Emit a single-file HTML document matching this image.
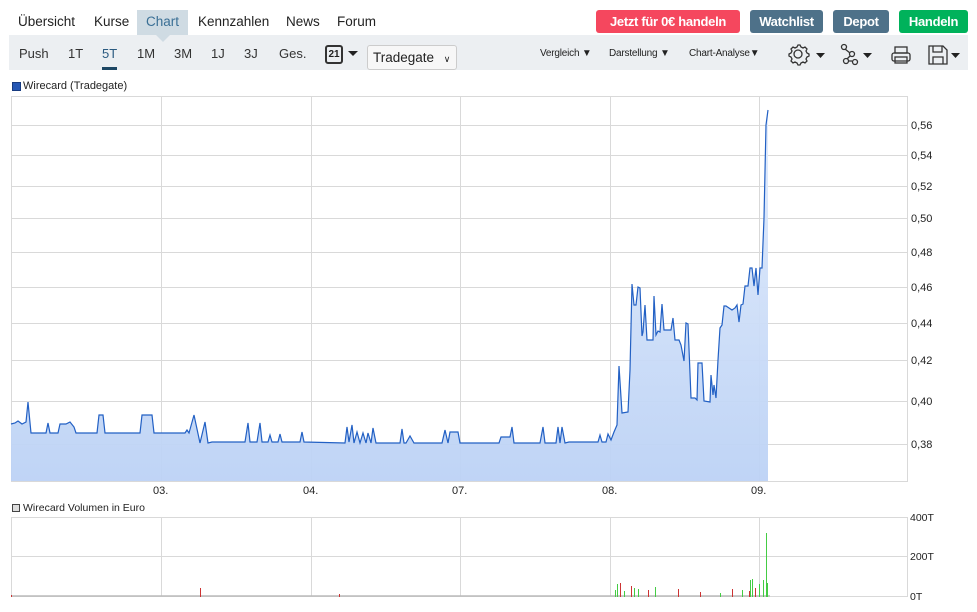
<!DOCTYPE html>
<html><head><meta charset="utf-8"><style>
body{margin:0;width:977px;height:612px;background:#fff;font-family:"Liberation Sans",sans-serif;position:relative;overflow:hidden}
.a{position:absolute}
.nav{font-size:13.5px;color:#222;top:14px}
.btn{position:absolute;top:10px;height:23px;border-radius:3px;color:#fff;font-weight:bold;font-size:13px;line-height:23px;text-align:center;letter-spacing:-0.3px}
.tb{font-size:13px;color:#333;top:46px}
.sm{font-size:10px;color:#222;top:48px;letter-spacing:-0.2px}
.lbl{font-size:11px;color:#222}
</style></head><body>
<div class="a" style="left:137px;top:10px;width:51px;height:25px;background:#cfdbe3"></div>
<div class="a nav" style="left:18px">Übersicht</div>
<div class="a nav" style="left:94px">Kurse</div>
<div class="a nav" style="left:146px;color:#3a6f95">Chart</div>
<div class="a nav" style="left:198px">Kennzahlen</div>
<div class="a nav" style="left:286px">News</div>
<div class="a nav" style="left:337px">Forum</div>
<div class="btn" style="left:596px;width:144px;background:#f5475e">Jetzt für 0€ handeln</div>
<div class="btn" style="left:750px;width:73px;background:#4e7189">Watchlist</div>
<div class="btn" style="left:833px;width:56px;background:#4e7189">Depot</div>
<div class="btn" style="left:899px;width:69px;background:#00b25b">Handeln</div>
<div class="a" style="left:9px;top:35px;width:959px;height:35px;background:#eceff2"></div>
<div class="a" style="left:156px;top:35px;width:0;height:0;border-left:7px solid transparent;border-right:7px solid transparent;border-top:7px solid #cfdbe3"></div>
<div class="a tb" style="left:19px">Push</div>
<div class="a tb" style="left:68px">1T</div>
<div class="a tb" style="left:102px;color:#2a5a80">5T</div>
<div class="a" style="left:102px;top:67px;width:15px;height:3px;background:#1d4764"></div>
<div class="a tb" style="left:137px">1M</div>
<div class="a tb" style="left:174px">3M</div>
<div class="a tb" style="left:211px">1J</div>
<div class="a tb" style="left:244px">3J</div>
<div class="a tb" style="left:279px">Ges.</div>
<div class="a" style="left:325px;top:45px;width:14px;height:15px;border:2px solid #333;border-radius:3px;font-size:10px;font-weight:bold;line-height:16px;text-align:center;color:#222">21</div>
<div class="a" style="left:348px;top:51px;border-left:5px solid transparent;border-right:5px solid transparent;border-top:5px solid #222"></div>
<div class="a" style="left:367px;top:45px;width:88px;height:23px;background:#f7f7f7;border:1px solid #ccc;border-radius:3px;font-size:13.5px;line-height:23px;color:#222;text-indent:5px">Tradegate <span style="font-size:9px;margin-left:6px">&#8744;</span></div>
<div class="a sm" style="left:540px">Vergleich &#9660;</div>
<div class="a sm" style="left:609px">Darstellung &#9660;</div>
<div class="a sm" style="left:689px">Chart-Analyse&#9660;</div>
<svg class="a" style="left:780px;top:36px" width="197" height="36" viewBox="0 0 197 36">
<g fill="none" stroke="#333" stroke-width="1.3">
<circle cx="18" cy="18" r="4"/>
<path d="M18 9 l2 0 l1 2 l2 1 l2-1 l2 2 l-1 2 l1 2 l2 1 v2 l-2 1 l-1 2 l1 2 l-2 2 l-2-1 l-2 1 l-1 2 h-2 l-1-2 l-2-1 l-2 1 l-2-2 l1-2 l-1-2 l-2-1 v-2 l2-1 l1-2 l-1-2 l2-2 l2 1 l2-1 z"/>
<circle cx="64" cy="11" r="2.5"/><circle cx="72" cy="18" r="2.5"/><circle cx="66" cy="25" r="2.5"/><circle cx="75" cy="26" r="2.5"/>
<path d="M65 13 L70 17 M70 20 L67 23 M68 25 H72"/>
<rect x="112" y="17" width="18" height="8" rx="2"/><rect x="115" y="11" width="12" height="6"/><rect x="115" y="21" width="12" height="6"/>
<path d="M149 10 h14 l4 4 v14 h-18 z M153 10 v6 h9 v-6 M153 28 v-7 h10 v7"/>
</g>
<g fill="#222"><path d="M36 17 h9 l-4.5 5z M83 17 h9 l-4.5 5z M171 17 h9 l-4.5 5z"/></g>
</svg>
<div class="a" style="left:12px;top:82px;width:7px;height:7px;background:#2557b4;border:1px solid #173b80"></div>
<div class="a lbl" style="left:23px;top:80px">Wirecard (Tradegate)</div>
<div class="a" style="left:12px;top:504px;width:6px;height:6px;background:#ddd;border:1px solid #444"></div>
<div class="a lbl" style="left:23px;top:502px;font-size:10.5px">Wirecard Volumen in Euro</div>
<svg class="a" style="left:0;top:0" width="977" height="612">
<defs><linearGradient id="g" x1="0" y1="0" x2="0" y2="1"><stop offset="0" stop-color="#e2ecfc"/><stop offset="1" stop-color="#bcd2f5"/></linearGradient></defs>
<g stroke="#d9d9d9" stroke-width="1" fill="none">
<rect x="11.5" y="96.5" width="896" height="385"/>
<path d="M161.5 96V481 M311.5 96V481 M460.5 96V481 M610.5 96V481 M759.5 96V481"/>
<path d="M11 125.5H907 M11 155.5H907 M11 186.5H907 M11 218.5H907 M11 252.5H907 M11 287.5H907 M11 323.5H907 M11 360.5H907 M11 401.5H907 M11 444.5H907"/>
<path d="M11 517.5H907 M11 556.5H907 M11 596.5H907 M11.5 517V597 M907.5 517V597 M161.5 517V597 M311.5 517V597 M460.5 517V597 M610.5 517V597 M759.5 517V597"/>
</g>
<polygon fill="url(#g)" opacity="0.95" points="11,481 11,424 15,423 18,421 22,424 26,422 28,402 31,433 46,433 48,423 50,433 58,433 60,424 66,424 70,422 74,427 76,433 97,433 99,415 103,415 105,433 140,433 142,415 152,415 154,433 185,433 187,430 189,433 194,415 200,443 205,422 208,443 212,442 245,442 248,423 250,442 257,442 260,423 262,442 268,442 270,435 272,442 278,442 280,434 282,442 300,442 302,432 304,442 345,443 347,427 349,442 352,425 354,443 357,432 360,443 363,433 366,443 368,433 371,443 373,428 376,443 400,443 402,429 404,443 406,443 410,436 414,443 442,443 445,430 448,443 450,432 458,432 460,443 499,443 501,437 510,437 512,427 514,443 540,443 543,427 545,443 556,443 558,427 560,443 562,427 565,443 569,442 598,442 600,435 602,442 606,442 608,434 611,440 614,432 617,425 619,366 622,413 628,412 630,370 632,284 634,305 636,305 638,287 640,288 642,336 643,332 645,305 647,340 653,340 654,296 656,335 658,331 660,332 662,304 664,330 671,330 673,318 675,340 679,340 681,345 684,361 686,323 688,324 691,398 695,398 697,400 698,363 702,363 704,401 710,402 711,375 713,395 714,385 716,398 718,360 720,328 722,325 724,306 726,306 732,310 735,308 737,305 739,322 741,305 743,304 745,286 748,286 750,268 752,268 754,286 756,268 758,295 760,268 762,268 764,218 766,125 768,110 768,481"/>
<polyline fill="none" stroke="#2260c4" stroke-width="1.2" points="11,424 15,423 18,421 22,424 26,422 28,402 31,433 46,433 48,423 50,433 58,433 60,424 66,424 70,422 74,427 76,433 97,433 99,415 103,415 105,433 140,433 142,415 152,415 154,433 185,433 187,430 189,433 194,415 200,443 205,422 208,443 212,442 245,442 248,423 250,442 257,442 260,423 262,442 268,442 270,435 272,442 278,442 280,434 282,442 300,442 302,432 304,442 345,443 347,427 349,442 352,425 354,443 357,432 360,443 363,433 366,443 368,433 371,443 373,428 376,443 400,443 402,429 404,443 406,443 410,436 414,443 442,443 445,430 448,443 450,432 458,432 460,443 499,443 501,437 510,437 512,427 514,443 540,443 543,427 545,443 556,443 558,427 560,443 562,427 565,443 569,442 598,442 600,435 602,442 606,442 608,434 611,440 614,432 617,425 619,366 622,413 628,412 630,370 632,284 634,305 636,305 638,287 640,288 642,336 643,332 645,305 647,340 653,340 654,296 656,335 658,331 660,332 662,304 664,330 671,330 673,318 675,340 679,340 681,345 684,361 686,323 688,324 691,398 695,398 697,400 698,363 702,363 704,401 710,402 711,375 713,395 714,385 716,398 718,360 720,328 722,325 724,306 726,306 732,310 735,308 737,305 739,322 741,305 743,304 745,286 748,286 750,268 752,268 754,286 756,268 758,295 760,268 762,268 764,218 766,125 768,110"/>
<g font-family="Liberation Sans" font-size="11" fill="#222">
<text x="911" y="129">0,56</text><text x="911" y="159">0,54</text><text x="911" y="190">0,52</text><text x="911" y="222">0,50</text><text x="911" y="256">0,48</text><text x="911" y="291">0,46</text><text x="911" y="327">0,44</text><text x="911" y="364">0,42</text><text x="911" y="405">0,40</text><text x="911" y="448">0,38</text>
<text x="153" y="494">03.</text><text x="303" y="494">04.</text><text x="452" y="494">07.</text><text x="602" y="494">08.</text><text x="751" y="494">09.</text>
<text x="910" y="521" font-size="10.5">400T</text><text x="910" y="560" font-size="10.5">200T</text><text x="910" y="600" font-size="10.5">0T</text>
</g>
<path stroke="#bbb" stroke-width="1.5" d="M11 596H770"/>
<path stroke="#cc3333" stroke-width="1" d="M11.5 597V595 M200.5 597V588 M339.5 597V594 M620.5 597V583 M631.5 597V586 M648.5 597V590 M678.5 597V589 M700.5 597V592 M732.5 597V589 M749.5 597V591 M755.5 597V588"/>
<path stroke="#44cc44" stroke-width="1" d="M615.5 597V590 M617.5 597V584 M624.5 597V591 M634.5 597V588 M638.5 597V589 M655.5 597V587 M720.5 597V593 M742.5 597V590 M750.5 597V580 M752.5 597V579 M759.5 597V584 M763.5 597V580 M766.5 597V533 M767.5 597V583"/>
</svg>
</body></html>
